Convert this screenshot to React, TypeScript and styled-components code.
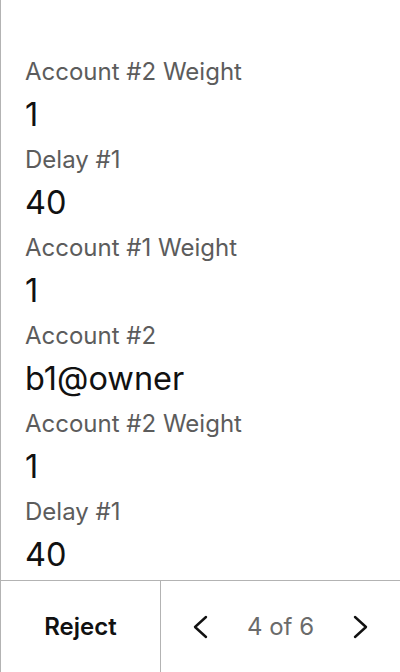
import React from 'react';
import styled, { createGlobalStyle } from 'styled-components';

const GlobalStyle = createGlobalStyle`
  html, body {
    margin: 0;
    padding: 0;
    background: #fff;
  }
  body {
    font-family: Inter, "Noto Sans", sans-serif;
    -webkit-font-smoothing: antialiased;
  }
`;

const Screen = styled.div`
  width: 400px;
  height: 672px;
  display: flex;
  flex-direction: column;
  border-left: 1px solid #b3b3b3;
  box-sizing: border-box;
  overflow: hidden;
`;

const Details = styled.div`
  flex: 1;
  padding: 56px 24px 0;
  display: flex;
  flex-direction: column;
  gap: 2px;
  overflow: hidden;
`;

const Field = styled.div`
  display: flex;
  flex-direction: column;
`;

const Label = styled.div`
  font-size: 24px;
  line-height: 32px;
  color: #5c5c5c;
`;

const Value = styled.div`
  font-size: 32.5px;
  line-height: 54px;
  color: #111;
`;

const Footer = styled.div`
  height: 92px;
  flex-shrink: 0;
  display: grid;
  grid-template-columns: 160px 1fr;
  border-top: 1px solid #b3b3b3;
  box-sizing: border-box;
`;

const RejectButton = styled.button`
  background: none;
  border: none;
  border-right: 1px solid #b3b3b3;
  font-family: inherit;
  font-size: 24px;
  font-weight: 600;
  color: #111;
  cursor: pointer;
`;

const Pager = styled.div`
  display: flex;
  align-items: center;
  justify-content: space-between;
  padding: 0 31px;
`;

const NavButton = styled.button`
  background: none;
  border: none;
  padding: 0;
  display: flex;
  align-items: center;
  color: #111;
  cursor: pointer;
`;

const PageText = styled.span`
  font-size: 24px;
  color: #6b6b6b;
`;

const Chevron = ({ dir }: { dir: 'left' | 'right' }) => (
  <svg width="16" height="24" viewBox="0 0 16 24" fill="none">
    <path
      d={dir === 'left' ? 'M14 2 L3 12 L14 22' : 'M2 2 L13 12 L2 22'}
      stroke="currentColor"
      strokeWidth="2.4"
      strokeLinecap="round"
      strokeLinejoin="round"
    />
  </svg>
);

const fields = [
  { label: 'Account #2 Weight', value: '1' },
  { label: 'Delay #1', value: '40' },
  { label: 'Account #1 Weight', value: '1' },
  { label: 'Account #2', value: 'b1@owner' },
  { label: 'Account #2 Weight', value: '1' },
  { label: 'Delay #1', value: '40' },
];

export default function App() {
  return (
    <>
      <GlobalStyle />
      <Screen>
        <Details>
          {fields.map((f, i) => (
            <Field key={i}>
              <Label>{f.label}</Label>
              <Value>{f.value}</Value>
            </Field>
          ))}
        </Details>
        <Footer>
          <RejectButton>Reject</RejectButton>
          <Pager>
            <NavButton aria-label="Previous">
              <Chevron dir="left" />
            </NavButton>
            <PageText>4 of 6</PageText>
            <NavButton aria-label="Next">
              <Chevron dir="right" />
            </NavButton>
          </Pager>
        </Footer>
      </Screen>
    </>
  );
}
